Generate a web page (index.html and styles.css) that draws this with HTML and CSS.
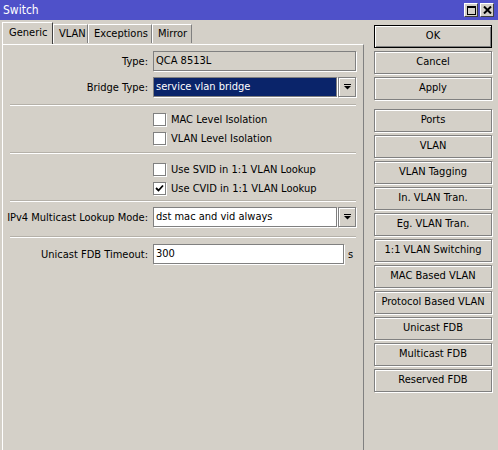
FILE: index.html
```html
<!DOCTYPE html>
<html lang="en">
<head>
    <meta charset="UTF-8">
    <title>Switch</title>
    <link rel="stylesheet" href="styles.css">
</head>
<body>
    <div class="window">
        <div class="titlebar">
            <div class="title">Switch</div>
            <div class="win-buttons">
                <div class="win-btn">
                    <svg width="9" height="9" viewBox="0 0 9 9"><rect x="0.5" y="0.5" width="8" height="8" fill="none" stroke="#000"/><rect x="0" y="0" width="9" height="2" fill="#000"/></svg>
                </div>
                <div class="win-btn">
                    <svg width="9" height="8" viewBox="0 0 9 8"><path d="M1 0.5 L8 7.5 M8 0.5 L1 7.5" stroke="#000" stroke-width="2"/></svg>
                </div>
            </div>
        </div>

        <div class="content">
            <div class="left">
                <div class="tabs">
                    <div class="tab active">Generic</div>
                    <div class="tab">VLAN</div>
                    <div class="tab">Exceptions</div>
                    <div class="tab">Mirror</div>
                </div>

                <div class="panel">
                    <div class="row first">
                        <label>Type:</label>
                        <div class="field readonly wide">QCA 8513L</div>
                    </div>
                    <div class="row gap6">
                        <label>Bridge Type:</label>
                        <div class="field selected">service vlan bridge</div>
                        <div class="drop">
                            <svg width="7" height="7" viewBox="0 0 7 7"><rect x="0" y="0" width="7" height="1" fill="#000"/><polygon points="0,2 7,2 3.5,5.5" fill="#000"/></svg>
                        </div>
                    </div>

                    <div class="sep s1"></div>

                    <div class="check c1"><span class="box"></span>MAC Level Isolation</div>
                    <div class="check"><span class="box"></span>VLAN Level Isolation</div>

                    <div class="sep s2"></div>

                    <div class="check c3"><span class="box"></span>Use SVID in 1:1 VLAN Lookup</div>
                    <div class="check c4">
                        <span class="box">
                            <svg width="9" height="9" viewBox="0 0 9 9"><path d="M1 4 L3.5 6.5 L8 1.5" fill="none" stroke="#000" stroke-width="1.8"/></svg>
                        </span>Use CVID in 1:1 VLAN Lookup
                    </div>

                    <div class="sep s3"></div>

                    <div class="row gap5">
                        <label>IPv4 Multicast Lookup Mode:</label>
                        <div class="field">dst mac and vid always</div>
                        <div class="drop">
                            <svg width="7" height="7" viewBox="0 0 7 7"><rect x="0" y="0" width="7" height="1" fill="#000"/><polygon points="0,2 7,2 3.5,5.5" fill="#000"/></svg>
                        </div>
                    </div>

                    <div class="sep s4"></div>

                    <div class="row gap6">
                        <label>Unicast FDB Timeout:</label>
                        <div class="field medium">300</div>
                        <span class="unit">s</span>
                    </div>
                </div>
            </div>

            <div class="right">
                <div class="btn default">OK</div>
                <div class="btn">Cancel</div>
                <div class="btn">Apply</div>
                <div class="btn group">Ports</div>
                <div class="btn">VLAN</div>
                <div class="btn">VLAN Tagging</div>
                <div class="btn">In. VLAN Tran.</div>
                <div class="btn">Eg. VLAN Tran.</div>
                <div class="btn">1:1 VLAN Switching</div>
                <div class="btn">MAC Based VLAN</div>
                <div class="btn">Protocol Based VLAN</div>
                <div class="btn">Unicast FDB</div>
                <div class="btn">Multicast FDB</div>
                <div class="btn">Reserved FDB</div>
            </div>
        </div>
    </div>
</body>
</html>
```

FILE: styles.css
```css
body {
    margin: 0;
    padding: 0;
    background-color: #d4d0c8;
    font-family: "DejaVu Sans Condensed", "DejaVu Sans", sans-serif;
    font-size: 11px;
    color: #000;
}

.window {
    width: 498px;
    height: 450px;
    overflow: hidden;
}

.titlebar {
    height: 20px;
    background-color: #4f51c9;
    color: white;
    display: flex;
    justify-content: space-between;
    align-items: center;
}

.titlebar .title {
    font-size: 12px;
    padding-left: 3px;
    padding-bottom: 1px;
}

.win-buttons {
    display: flex;
    gap: 2px;
    margin-right: 4px;
}

.win-btn {
    width: 12px;
    height: 12px;
    background-color: #d4d0c8;
    border: 1px solid;
    border-color: #fff #404040 #404040 #fff;
    display: flex;
    align-items: center;
    justify-content: center;
}

.content {
    display: flex;
    height: 430px;
}

.left {
    margin-left: 2px;
    width: 362px;
    display: flex;
    flex-direction: column;
}

.tabs {
    height: 24px;
    display: flex;
    align-items: flex-end;
}

.tab {
    height: 19px;
    line-height: 18px;
    padding: 0 0 0 5px;
    margin-bottom: 1px;
    border-top: 1px solid #fff;
    border-left: 1px solid #fff;
    border-right: 1px solid #808080;
    background-color: #cdc9c1;
    box-sizing: border-box;
    white-space: nowrap;
    overflow: hidden;
}

.tab.active {
    height: 22px;
    width: 51px;
    line-height: 20px;
    margin-bottom: 0;
    padding: 0 0 0 6px;
    background-color: #d4d0c8;
    border-right: 1px solid #404040;
}

.tab:nth-child(2) { width: 35px; }
.tab:nth-child(3) { width: 64px; }
.tab:nth-child(4) { width: 40px; }

.panel {
    flex: 1;
    border-top: 1px solid #fff;
    border-left: 1px solid #fff;
    border-right: 1px solid #808080;
}

.row {
    display: flex;
    align-items: center;
    height: 20px;
}

.row.first { margin-top: 6px; }
.row.gap6 { margin-top: 6px; }
.row.gap5 { margin-top: 5px; }

.row label {
    width: 145px;
    margin-right: 5px;
    text-align: right;
    white-space: nowrap;
}

.field {
    height: 20px;
    width: 184px;
    box-sizing: border-box;
    border: 1px solid #808080;
    box-shadow: 1px 1px 0 #fff;
    background-color: #fff;
    line-height: 17px;
    padding-left: 2px;
    white-space: nowrap;
    overflow: hidden;
}

.field.wide { width: 203px; }
.field.medium { width: 191px; }

.field.readonly {
    background-color: #d4d0c8;
}

.field.selected {
    background-color: #0a246a;
    color: #fff;
}

.drop {
    width: 18px;
    height: 20px;
    margin-left: 1px;
    box-sizing: border-box;
    border: 1px solid #808080;
    box-shadow: inset 1px 1px 0 #fff, 1px 1px 0 #fff;
    display: flex;
    align-items: center;
    justify-content: center;
}

.unit {
    margin-left: 4px;
}

.sep {
    margin-left: 7px;
    width: 346px;
    border-top: 1px solid #b5b1a9;
    border-bottom: 1px solid #fff;
}

.sep.s1 { margin-top: 7px; }
.sep.s2 { margin-top: 4px; }
.sep.s3 { margin-top: 3px; }
.sep.s4 { margin-top: 9px; }

.check {
    height: 19px;
    display: flex;
    align-items: center;
    padding-left: 150px;
}

.check.c1 { margin-top: 4px; }
.check.c3 { margin-top: 6px; }
.check.c4 { height: 18px; }

.check .box {
    width: 13px;
    height: 13px;
    box-sizing: border-box;
    border: 1px solid #808080;
    box-shadow: 1px 1px 0 #fff;
    background-color: #fff;
    margin-right: 5px;
    display: flex;
    align-items: center;
    justify-content: center;
}

.right {
    margin-left: 10px;
    width: 118px;
    padding-top: 5px;
    display: flex;
    flex-direction: column;
    gap: 3px;
}

.btn {
    height: 23px;
    box-sizing: border-box;
    border: 1px solid #808080;
    box-shadow: inset 1px 1px 0 #fff, 1px 1px 0 #fff;
    text-align: center;
    line-height: 20px;
    white-space: nowrap;
}

.btn.default {
    border: 1px solid #000;
    box-shadow: inset 1px 1px 0 #fff, inset -1px -1px 0 #808080;
}

.btn.group {
    margin-top: 6px;
}
```
